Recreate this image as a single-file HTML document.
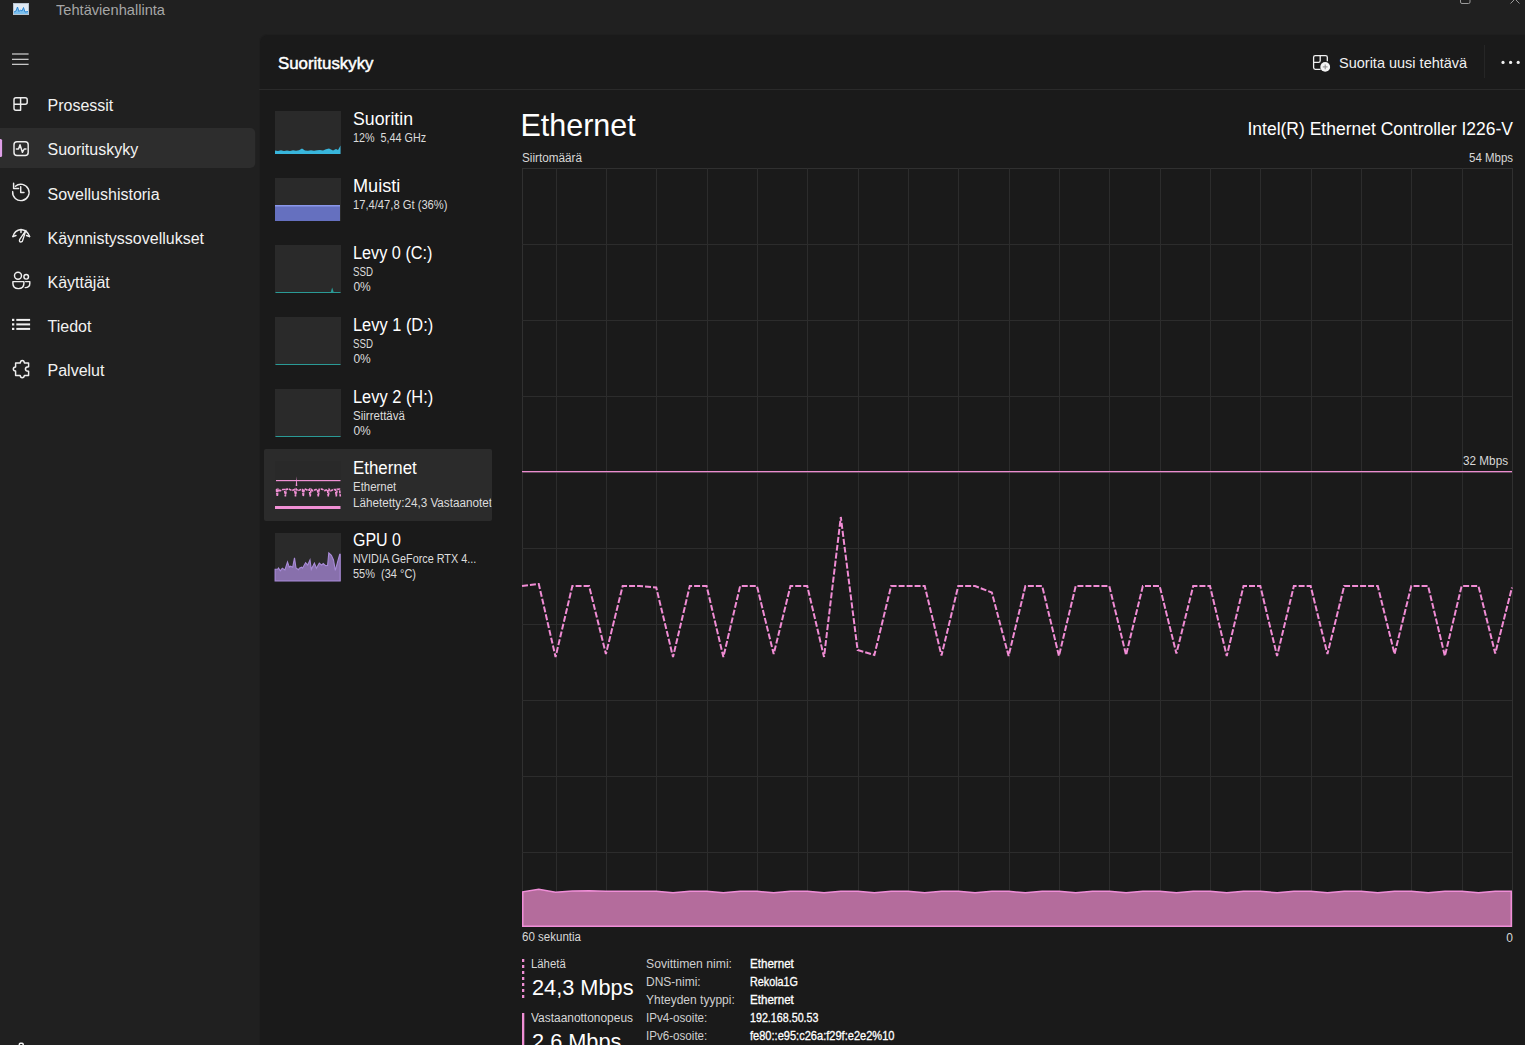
<!DOCTYPE html>
<html><head><meta charset="utf-8">
<style>
html,body{margin:0;padding:0;width:1525px;height:1045px;overflow:hidden;background:#202020;font-family:"Liberation Sans",sans-serif;}
.t{position:absolute;white-space:pre;line-height:1;}
.abs{position:absolute;}
#panel{position:absolute;left:260px;top:35px;width:1300px;height:1100px;background:#1a1a1a;border-top-left-radius:8px;box-shadow:-1px -1px 0 #1e1e1e;}
.thumb{position:absolute;left:275px;width:66px;background:#2a2a2a;overflow:hidden;}
</style></head><body>
<!-- title bar icon -->
<svg class="abs" style="left:0;top:0" width="1525" height="1045" viewBox="0 0 1525 1045">
  <!-- app icon -->
  <rect x="13.5" y="3.5" width="15" height="11" fill="#dfe9f3" stroke="#b8c4d0" stroke-width="1"/>
  <path d="M14 13 L14 12 L16 11 L17.5 7 L19 11.5 L20.5 10 L22 11 L23.5 7.5 L25 12 L28 11.5 L28 14 L14 14 Z" fill="#7cc0ee"/>
  <path d="M14 12 L16 11 L17.5 7 L19 11.5 L20.5 10 L22 11 L23.5 7.5 L25 12 L28 11.5" fill="none" stroke="#1f7fd0" stroke-width="0.9"/>
  <!-- window buttons -->
  <path d="M1460.5 -6 V2 Q1460.5 3.5 1462 3.5 H1468.5 Q1470 3.5 1470 2 V-6" fill="none" stroke="#9a9a9a" stroke-width="1"/>
  <path d="M1510.5 3.5 L1520 -6 M1519.5 3.5 L1510 -6" fill="none" stroke="#9a9a9a" stroke-width="1"/>
  <!-- hamburger -->
  <g stroke="#e4e4e4" stroke-width="1.1">
    <line x1="12" y1="54" x2="28.6" y2="54"/>
    <line x1="12" y1="59.3" x2="28.6" y2="59.3"/>
    <line x1="12" y1="64.3" x2="28.6" y2="64.3"/>
  </g>
  <!-- nav selection -->
  <rect x="-4" y="128" width="259.2" height="40" rx="5" fill="#2d2d2d"/>
  <rect x="-1.5" y="139" width="3.6" height="18" rx="1.5" fill="#df9fe8"/>
  <g fill="none" stroke="#eeeeee" stroke-width="1.45" stroke-linejoin="round" stroke-linecap="round">
    <!-- Prosessit -->
    <path d="M14 108.3 V99.8 Q14 97.8 16 97.8 H25.2 Q27.2 97.8 27.2 99.8 V102.2 Q27.2 104.2 25.2 104.2 H20.6 V110.3 H16 Q14 110.3 14 108.3 Z M14 104.2 H20.6 V97.8"/>
    <!-- Suorituskyky -->
    <rect x="14" y="141.8" width="14.2" height="13.6" rx="3"/>
    <path d="M16.4 149 H18.5 L20 144.8 L22.4 152.3 L24.2 149 H26"/>
    <!-- Sovellushistoria -->
    <path d="M12.7 191.6 A8.2 8.2 0 1 0 15.4 186.3"/>
    <path d="M13.6 183.3 V188.5 H18.6"/>
    <path d="M20.7 186.6 V192.5 H24"/>
    <!-- Kaynnistys -->
    <path d="M12.9 236.6 Q14.5 230.2 21 229.5 Q27.5 230.2 29.6 236.6"/>
    <path d="M13 236.5 L16 235.5 M29.5 236.5 L26.5 235.5 M21 229.6 V232.5"/>
    <path d="M25.9 230.4 L19.6 239.6 Q18.9 241.9 20.9 242 Q22.7 241.9 22.7 240.3 Z" stroke-width="1.3"/>
    <!-- Kayttajat -->
    <circle cx="18" cy="275.8" r="3.5"/>
    <circle cx="26.2" cy="276.8" r="2.3"/>
    <path d="M12.9 281.6 H23.9 V283.3 Q23.9 288.6 18.4 288.6 Q12.9 288.6 12.9 283.3 Z"/>
    <path d="M25.6 281.6 H29.8 V283.5 Q29.8 287.6 25.2 287.6"/>
    <!-- Palvelut -->
    <path d="M15.6 363 H20.3 Q20.5 360.4 22.3 360.4 Q24.1 360.4 24.4 363 H28.6 V366.8 Q25.4 367 25.4 369 Q25.4 371.2 28.6 371.3 V375.4 H24.4 Q24.1 377.7 22.2 377.7 Q20.4 377.7 20.2 375.4 H15.6 V371 Q13.3 370.8 13.3 369 Q13.3 367.2 15.6 367 Z"/>
  </g>
  <!-- Tiedot -->
  <g fill="#f0f0f0">
    <rect x="12" y="318.8" width="2.3" height="2.2"/>
    <rect x="12" y="323.3" width="2.3" height="2.2"/>
    <rect x="12" y="327.8" width="2.3" height="2.2"/>
    <rect x="16.3" y="318.9" width="13.8" height="2"/>
    <rect x="16.3" y="323.4" width="13.8" height="2"/>
    <rect x="16.3" y="327.9" width="13.8" height="2"/>
  </g>
  <!-- partial settings icon at bottom -->
  <path d="M19.3 1046 V1044.4 Q19.3 1043.3 20.4 1043.3 H22.1 Q23.2 1043.3 23.2 1044.4 V1046" fill="none" stroke="#f4f4f4" stroke-width="1.5"/>
</svg>

<div id="panel"></div>

<svg class="abs" style="left:0;top:0" width="1525" height="1045" viewBox="0 0 1525 1045">
  <!-- header divider -->
  <rect x="259" y="89" width="1266" height="1" fill="#2a2a2a"/>
  <!-- new task icon -->
  <g fill="none" stroke="#f0f0f0" stroke-width="1.3">
    <path d="M1320.6 69.3 H1315.3 Q1313.6 69.3 1313.6 67.6 V57.3 Q1313.6 55.6 1315.3 55.6 H1325.6 Q1327.3 55.6 1327.3 57.3 V61.2"/>
    <path d="M1313.6 62.3 H1318.6 Q1320.2 62.3 1320.2 60.7 V55.6"/>
  </g>
  <circle cx="1325.2" cy="66.9" r="4.9" fill="#f4f4f4"/>
  <path d="M1325.2 64.5 V69.3 M1322.8 66.9 H1327.6" stroke="#8a8a8a" stroke-width="1"/>
  <rect x="1484" y="45" width="1" height="33" fill="#262626"/>
  <g fill="#f0f0f0">
    <circle cx="1503" cy="62.4" r="1.6"/>
    <circle cx="1510.6" cy="62.4" r="1.6"/>
    <circle cx="1518.2" cy="62.4" r="1.6"/>
  </g>

  <!-- perf list selection -->
  <rect x="264" y="449" width="228" height="72" rx="2" fill="#2b2b2b"/>
  <!-- thumbnails -->
  <g fill="#2a2a2a">
    <rect x="275" y="111" width="66" height="43"/>
    <rect x="275" y="178" width="66" height="43"/>
    <rect x="275" y="245" width="66" height="48"/>
    <rect x="275" y="317" width="66" height="48"/>
    <rect x="275" y="389" width="66" height="48"/>
    <rect x="275" y="461" width="66" height="48" fill="#292929"/>
    <rect x="275" y="533" width="66" height="48"/>
  </g>
  <!-- cpu -->
  <path d="M275 154 V150.5 L278 151 L281 150.2 L284 151 L287 150.5 L290 151 L293 150.3 L296 150.8 L299 150.2 L302 148.5 L305 150.5 L308 150.8 L311 150.2 L314 150.8 L317 150.3 L320 150 L323 150.5 L326 149.2 L329 148.5 L331 149.5 L333 150.5 L336 149 L338 150 L340.5 145.5 V154 Z" fill="#38b6dc"/>
  <!-- memory -->
  <rect x="275" y="205.5" width="65" height="15.5" fill="#6570bf"/>
  <rect x="275" y="205" width="65" height="1.5" fill="#8a97ea"/>
  <!-- disks -->
  <rect x="275.5" y="292" width="65" height="1" fill="#2a9a96"/>
  <path d="M330.6 292.5 L332.2 287.4 L333.8 292.5 Z" fill="#2a9a96"/>
  <rect x="275.5" y="364" width="65" height="1" fill="#2a9a96"/>
  <rect x="275.5" y="436" width="65" height="1" fill="#2a9a96"/>
  <!-- ethernet thumb -->
  <rect x="276" y="480" width="64.5" height="1.2" fill="#f090d4"/>
  <path d="M296.5 476.5 L297.3 486 L295.7 486 Z" fill="#f090d4"/>
  <polyline points="276.0,489.3 276.4,489.5 277.3,496.3 278.2,489.3 279.9,490.8 282.9,489.5 284.5,489.5 285.4,496.3 286.3,489.3 288.9,489.0 291.9,490.6 294.6,489.5 295.5,496.3 296.4,489.3 297.9,490.8 300.9,489.5 302.4,489.5 303.3,496.3 304.2,489.3 305.2,489.0 308.2,490.6 309.3,489.5 310.2,496.3 311.1,489.3 312.8,490.8 315.8,489.5 317.4,489.5 318.3,496.3 319.2,489.3 321.8,489.0 324.8,490.6 327.4,489.5 328.3,496.3 329.2,489.3 330.8,490.8 333.8,489.5 335.4,489.5 336.3,496.3 337.2,489.3 339.5,489.2 340.3,496.5" fill="none" stroke="#f090d4" stroke-width="1.6" stroke-dasharray="3 0.8" stroke-linejoin="miter"/>
  <rect x="275" y="506" width="65.5" height="3" fill="#f090d4"/>
  <!-- gpu thumb -->
  <path d="M275.1 581 V569.3 L277.7 569.3 L278.5 568 L280.3 570.8 L282.3 568.2 L284.9 570 L287.5 562 L289.3 567.2 L290.6 566.2 L292.7 567.2 L294.5 557.9 L296 568 L298.4 569.8 L299.4 568.2 L301.5 567.2 L302.5 568.2 L305.6 562.6 L307.7 565.1 L310 560 L311.3 569.3 L314.4 563.1 L316.4 568.2 L319.3 563.1 L321.6 565.1 L323.2 563.6 L325.7 565.7 L327.6 565.4 L328.8 553 L331.4 555.3 L333.5 560 L335.3 570.3 L337.6 562 L339.7 554.3 L340.2 554.3 V581 Z" fill="#8870ac" stroke="#a98bd9" stroke-width="1.1"/>

  <!-- graph -->
  <rect x="522.5" y="168.5" width="990" height="758" fill="none" stroke="#303030" stroke-width="1"/>
  <g stroke="#2c2c2c" stroke-width="1" shape-rendering="crispEdges">
<line x1="556.5" y1="168" x2="556.5" y2="926" />
<line x1="606.5" y1="168" x2="606.5" y2="926" />
<line x1="656.5" y1="168" x2="656.5" y2="926" />
<line x1="707.5" y1="168" x2="707.5" y2="926" />
<line x1="757.5" y1="168" x2="757.5" y2="926" />
<line x1="807.5" y1="168" x2="807.5" y2="926" />
<line x1="858.5" y1="168" x2="858.5" y2="926" />
<line x1="908.5" y1="168" x2="908.5" y2="926" />
<line x1="958.5" y1="168" x2="958.5" y2="926" />
<line x1="1009.5" y1="168" x2="1009.5" y2="926" />
<line x1="1059.5" y1="168" x2="1059.5" y2="926" />
<line x1="1109.5" y1="168" x2="1109.5" y2="926" />
<line x1="1160.5" y1="168" x2="1160.5" y2="926" />
<line x1="1210.5" y1="168" x2="1210.5" y2="926" />
<line x1="1260.5" y1="168" x2="1260.5" y2="926" />
<line x1="1311.5" y1="168" x2="1311.5" y2="926" />
<line x1="1361.5" y1="168" x2="1361.5" y2="926" />
<line x1="1411.5" y1="168" x2="1411.5" y2="926" />
<line x1="1462.5" y1="168" x2="1462.5" y2="926" />
<line x1="522" y1="244.5" x2="1512" y2="244.5" />
<line x1="522" y1="320.5" x2="1512" y2="320.5" />
<line x1="522" y1="396.5" x2="1512" y2="396.5" />
<line x1="522" y1="472.5" x2="1512" y2="472.5" />
<line x1="522" y1="548.5" x2="1512" y2="548.5" />
<line x1="522" y1="624.5" x2="1512" y2="624.5" />
<line x1="522" y1="700.5" x2="1512" y2="700.5" />
<line x1="522" y1="776.5" x2="1512" y2="776.5" />
<line x1="522" y1="852.5" x2="1512" y2="852.5" />
  </g>
  <rect x="522" y="471" width="990" height="1.3" fill="#ec8ccf"/>
  <polyline points="522.00,586.0 538.78,584.0 555.56,657.0 572.34,586.0 589.12,586.0 605.90,654.0 622.68,586.0 639.46,586.0 656.24,587.5 673.02,657.0 689.80,586.0 706.58,586.0 723.36,657.0 740.14,586.0 756.92,586.0 773.69,654.0 790.47,586.0 807.25,586.0 824.03,657.0 840.81,517.0 857.59,650.0 874.37,655.0 891.15,586.0 907.93,586.0 924.71,586.0 941.49,655.5 958.27,586.0 975.05,586.0 991.83,592.5 1008.61,656.0 1025.39,586.0 1042.17,586.0 1058.95,656.0 1075.73,586.0 1092.51,586.0 1109.29,586.0 1126.07,655.0 1142.85,586.0 1159.63,586.0 1176.41,653.5 1193.19,586.0 1209.97,586.0 1226.75,656.0 1243.53,586.0 1260.31,586.0 1277.08,656.0 1293.86,586.0 1310.64,586.0 1327.42,654.0 1344.20,586.0 1360.98,586.0 1377.76,586.0 1394.54,654.0 1411.32,586.0 1428.10,586.0 1444.88,656.0 1461.66,586.0 1478.44,586.0 1495.22,653.5 1512.00,587.5" fill="none" stroke="#f08cd4" stroke-width="2" stroke-dasharray="6 2" stroke-linejoin="miter"/>
  <path id="recv" d="M522.75,926.25 L522.75,891.8 L538.78,889.2 L555.56,892.3 L572.34,891.0 L589.12,890.8 L605.90,891.3 L622.68,891.3 L639.46,891.3 L656.24,891.3 L673.02,892.8 L689.80,891.3 L706.58,891.3 L723.36,892.8 L740.14,891.3 L756.92,891.3 L773.69,892.8 L790.47,891.3 L807.25,891.3 L824.03,892.8 L840.81,891.3 L857.59,891.3 L874.37,892.8 L891.15,891.3 L907.93,891.3 L924.71,892.8 L941.49,891.3 L958.27,891.3 L975.05,892.8 L991.83,891.3 L1008.61,891.3 L1025.39,892.8 L1042.17,891.3 L1058.95,891.3 L1075.73,892.8 L1092.51,891.3 L1109.29,891.3 L1126.07,892.8 L1142.85,891.3 L1159.63,891.3 L1176.41,892.8 L1193.19,891.3 L1209.97,891.3 L1226.75,892.8 L1243.53,891.3 L1260.31,891.3 L1277.08,892.8 L1293.86,891.3 L1310.64,891.3 L1327.42,892.8 L1344.20,891.3 L1360.98,891.3 L1377.76,892.8 L1394.54,891.3 L1411.32,891.3 L1428.10,892.8 L1444.88,891.3 L1461.66,891.3 L1478.44,892.8 L1495.22,891.3 L1511.30,891.3 L1511.3,926.25 Z" fill="#b46c9c" stroke="#f08ed8" stroke-width="1.5"/>
  <!-- legend bars -->
  <g fill="#ef8fd5">
    <rect x="522" y="959" width="2.3" height="3"/>
    <rect x="522" y="965" width="2.3" height="3"/>
    <rect x="522" y="971" width="2.3" height="3"/>
    <rect x="522" y="977" width="2.3" height="3"/>
    <rect x="522" y="983" width="2.3" height="3"/>
    <rect x="522" y="989" width="2.3" height="3"/>
    <rect x="522" y="995" width="2.3" height="3"/>
    <rect x="522" y="1013" width="2.3" height="40"/>
  </g>
</svg>

<div class="t" style="top:2.72px;font-size:14.5px;color:#a6a6a6;left:56.00px;transform:scaleX(1.0090);transform-origin:0 0;">Tehtävienhallinta</div>
<div class="t" style="top:98.15px;font-size:16px;color:#f2f2f2;left:47.50px;">Prosessit</div>
<div class="t" style="top:142.35px;font-size:16px;color:#f2f2f2;left:47.50px;">Suorituskyky</div>
<div class="t" style="top:186.55px;font-size:16px;color:#f2f2f2;left:47.50px;">Sovellushistoria</div>
<div class="t" style="top:230.75px;font-size:16px;color:#f2f2f2;left:47.50px;">Käynnistyssovellukset</div>
<div class="t" style="top:274.95px;font-size:16px;color:#f2f2f2;left:47.50px;">Käyttäjät</div>
<div class="t" style="top:319.15px;font-size:16px;color:#f2f2f2;left:47.50px;">Tiedot</div>
<div class="t" style="top:363.35px;font-size:16px;color:#f2f2f2;left:47.50px;">Palvelut</div>
<div class="t" style="top:55.75px;font-size:16px;color:#ffffff;left:278.40px;transform:scaleX(1.0529);transform-origin:0 0;-webkit-text-stroke:0.45px #fff;">Suorituskyky</div>
<div class="t" style="top:56.32px;font-size:14.5px;color:#f0f0f0;left:1339.00px;">Suorita uusi tehtävä</div>
<div class="t" style="top:110.68px;font-size:17.5px;color:#ffffff;left:352.80px;transform:scaleX(1.0111);transform-origin:0 0;">Suoritin</div>
<div class="t" style="top:131.74px;font-size:12px;color:#dcdcdc;left:353.40px;transform:scaleX(0.8995);transform-origin:0 0;">12%  5,44 GHz</div>
<div class="t" style="top:177.68px;font-size:17.5px;color:#ffffff;left:352.80px;transform:scaleX(1.0349);transform-origin:0 0;">Muisti</div>
<div class="t" style="top:198.74px;font-size:12px;color:#dcdcdc;left:353.40px;transform:scaleX(0.9320);transform-origin:0 0;">17,4/47,8 Gt (36%)</div>
<div class="t" style="top:244.58px;font-size:17.5px;color:#ffffff;left:352.80px;transform:scaleX(0.9290);transform-origin:0 0;">Levy 0 (C:)</div>
<div class="t" style="top:265.54px;font-size:12px;color:#dcdcdc;left:353.40px;transform:scaleX(0.8101);transform-origin:0 0;">SSD</div>
<div class="t" style="top:280.94px;font-size:12px;color:#dcdcdc;left:353.40px;">0%</div>
<div class="t" style="top:316.88px;font-size:17.5px;color:#ffffff;left:352.80px;transform:scaleX(0.9372);transform-origin:0 0;">Levy 1 (D:)</div>
<div class="t" style="top:337.64px;font-size:12px;color:#dcdcdc;left:353.40px;transform:scaleX(0.8101);transform-origin:0 0;">SSD</div>
<div class="t" style="top:353.04px;font-size:12px;color:#dcdcdc;left:353.40px;">0%</div>
<div class="t" style="top:388.88px;font-size:17.5px;color:#ffffff;left:352.80px;transform:scaleX(0.9372);transform-origin:0 0;">Levy 2 (H:)</div>
<div class="t" style="top:409.64px;font-size:12px;color:#dcdcdc;left:353.40px;transform:scaleX(0.9624);transform-origin:0 0;">Siirrettävä</div>
<div class="t" style="top:425.04px;font-size:12px;color:#dcdcdc;left:353.40px;">0%</div>
<div class="t" style="top:460.18px;font-size:17.5px;color:#ffffff;left:352.80px;transform:scaleX(0.9629);transform-origin:0 0;">Ethernet</div>
<div class="t" style="top:481.44px;font-size:12px;color:#dcdcdc;left:353.40px;transform:scaleX(0.9543);transform-origin:0 0;">Ethernet</div>
<div class="t" style="top:496.74px;font-size:12px;color:#dcdcdc;left:353.40px;width:142px;overflow:hidden;padding-bottom:4px;transform:scaleX(0.975);transform-origin:0 0;">Lähetetty:24,3 Vastaanotettu</div>
<div class="t" style="top:532.38px;font-size:17.5px;color:#ffffff;left:352.80px;transform:scaleX(0.9137);transform-origin:0 0;">GPU 0</div>
<div class="t" style="top:553.44px;font-size:12px;color:#dcdcdc;left:353.40px;transform:scaleX(0.9033);transform-origin:0 0;">NVIDIA GeForce RTX 4...</div>
<div class="t" style="top:568.34px;font-size:12px;color:#dcdcdc;left:353.40px;transform:scaleX(0.9153);transform-origin:0 0;">55%  (34 °C)</div>
<div class="t" style="top:110.18px;font-size:30.5px;color:#ffffff;left:520.40px;">Ethernet</div>
<div class="t" style="top:120.78px;font-size:17.5px;color:#ffffff;left:1247.45px;">Intel(R) Ethernet Controller I226-V</div>
<div class="t" style="top:151.84px;font-size:12px;color:#d8d8d8;left:522.00px;transform:scaleX(0.9778);transform-origin:0 0;">Siirtomäärä</div>
<div class="t" style="top:151.64px;font-size:12px;color:#d8d8d8;left:1466.97px;transform:scaleX(0.9559);transform-origin:100% 0;">54 Mbps</div>
<div class="t" style="top:454.84px;font-size:12px;color:#d8d8d8;left:1461.97px;transform:scaleX(0.9776);transform-origin:100% 0;">32 Mbps</div>
<div class="t" style="top:931.44px;font-size:12px;color:#d8d8d8;left:522.00px;transform:scaleX(0.9611);transform-origin:0 0;">60 sekuntia</div>
<div class="t" style="top:931.64px;font-size:12px;color:#d8d8d8;left:1506.31px;">0</div>
<div class="t" style="top:957.74px;font-size:12px;color:#d8d8d8;left:531.30px;transform:scaleX(0.9454);transform-origin:0 0;">Lähetä</div>
<div class="t" style="top:976.57px;font-size:22px;color:#ffffff;left:531.50px;transform:scaleX(0.9880);transform-origin:0 0;">24,3 Mbps</div>
<div class="t" style="top:1011.94px;font-size:12px;color:#d8d8d8;left:531.00px;transform:scaleX(0.9948);transform-origin:0 0;">Vastaanottonopeus</div>
<div class="t" style="top:1030.57px;font-size:22px;color:#ffffff;left:531.50px;transform:scaleX(0.9880);transform-origin:0 0;">2,6 Mbps</div>
<div class="t" style="top:958.04px;font-size:12px;color:#cfcfcf;left:646.00px;transform:scaleX(1.0153);transform-origin:0 0;">Sovittimen nimi:</div>
<div class="t" style="top:958.04px;font-size:12px;color:#ffffff;left:749.80px;transform:scaleX(0.9653);transform-origin:0 0;-webkit-text-stroke:0.3px #fff;">Ethernet</div>
<div class="t" style="top:975.94px;font-size:12px;color:#cfcfcf;left:646.00px;">DNS-nimi:</div>
<div class="t" style="top:975.94px;font-size:12px;color:#ffffff;left:749.80px;transform:scaleX(0.8993);transform-origin:0 0;-webkit-text-stroke:0.3px #fff;">Rekola1G</div>
<div class="t" style="top:993.84px;font-size:12px;color:#cfcfcf;left:646.00px;">Yhteyden tyyppi:</div>
<div class="t" style="top:993.84px;font-size:12px;color:#ffffff;left:749.80px;transform:scaleX(0.9653);transform-origin:0 0;-webkit-text-stroke:0.3px #fff;">Ethernet</div>
<div class="t" style="top:1011.74px;font-size:12px;color:#cfcfcf;left:646.00px;transform:scaleX(0.9673);transform-origin:0 0;">IPv4-osoite:</div>
<div class="t" style="top:1011.74px;font-size:12px;color:#ffffff;left:749.80px;transform:scaleX(0.8925);transform-origin:0 0;-webkit-text-stroke:0.3px #fff;">192.168.50.53</div>
<div class="t" style="top:1029.64px;font-size:12px;color:#cfcfcf;left:646.00px;transform:scaleX(0.9673);transform-origin:0 0;">IPv6-osoite:</div>
<div class="t" style="top:1029.64px;font-size:12px;color:#ffffff;left:749.80px;transform:scaleX(0.9216);transform-origin:0 0;-webkit-text-stroke:0.3px #fff;">fe80::e95:c26a:f29f:e2e2%10</div>
</body></html>
